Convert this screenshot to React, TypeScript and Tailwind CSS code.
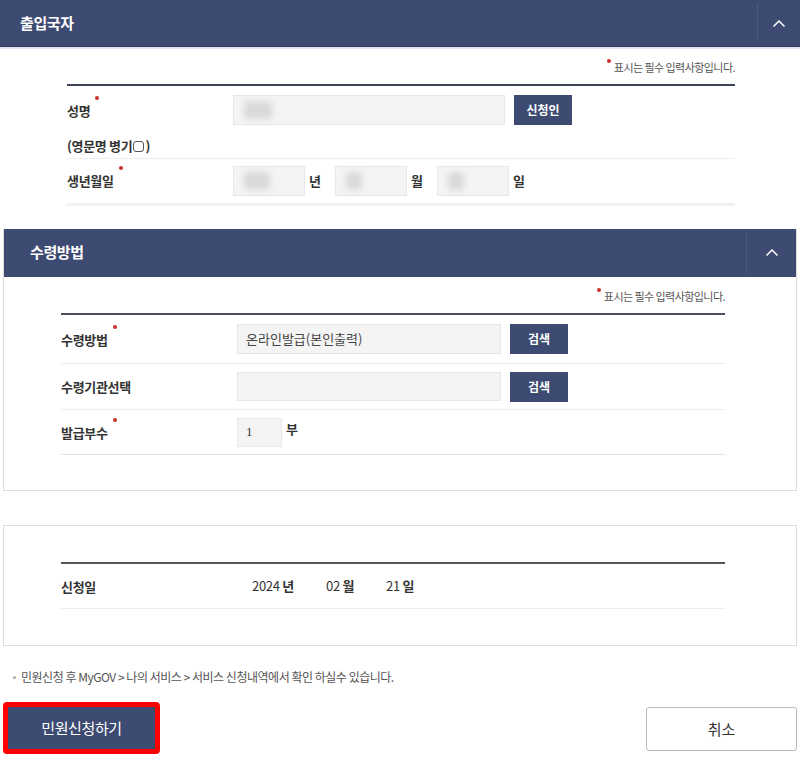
import React from "react";

const NAVY = "bg-[#3d4a72]";

function Dot() {
  return <span className="absolute -right-[9px] -top-[8px] h-[4px] w-[4px] rounded-full bg-[#c8322b]" />;
}

function Label({ text, required, w }: { text: string; required?: boolean; w: string }) {
  return (
    <div className={`flex ${w} items-center`}>
      <span className="relative block text-[13px] leading-none font-bold text-[#333] tracking-tight">
        {text}
        {required && <Dot />}
      </span>
    </div>
  );
}

function Chevron() {
  return (
    <svg width="14" height="9" viewBox="0 0 14 9" fill="none">
      <path d="M1.5 7.5L7 2l5.5 5.5" stroke="#fff" strokeWidth="1.5" />
    </svg>
  );
}

function RequiredNote() {
  return (
    <div className="flex justify-end">
      <span className="relative text-[11px] text-[#555] tracking-tighter">
        <span className="absolute -left-[7px] top-[0px] h-[4px] w-[4px] rounded-full bg-[#c8322b]" />
        표시는 필수 입력사항입니다.
      </span>
    </div>
  );
}

// blurred placeholder value shown in masked fields
function Masked({ w }: { w: string }) {
  return <div className={`h-[18px] ${w} rounded-sm bg-[#d9d9d9] blur-[3px]`} />;
}

function NavyButton({ text }: { text: string }) {
  return (
    <button className={`h-[30px] w-[58px] ${NAVY} text-[12px] font-bold text-white`}>{text}</button>
  );
}

export default function App() {
  return (
    <div className="h-[760px] w-[800px] overflow-hidden bg-white font-['Noto_Sans_CJK_KR',sans-serif] text-[#333]">
      {/* 출입국자 */}
      <div className="flex h-[47px] items-stretch justify-between bg-[#3d4a72] border-b border-[#2f3a5c]">
        <div className="flex items-center pl-5 text-[15px] font-bold text-white tracking-tight">출입국자</div>
        <div className="my-[4px] flex w-[43px] items-center justify-center border-l border-[#4d5a82]">
          <Chevron />
        </div>
      </div>
      <div className="h-[2px] bg-[#dfe6f3]" />
      <div className="pl-[67px] pr-[65px] pt-[10px]">
        <RequiredNote />
        <div className="mt-[8px] border-t-2 border-[#3d4458]" />
        <div className="border-b border-[#eee]">
          <div className="flex h-[49px] items-center">
            <Label text="성명" required w="w-[166px]" />
            <div className="flex h-[30px] w-[272px] items-center border border-[#e6e6e6] bg-[#f4f4f4] pl-[10px]">
              <Masked w="w-[28px]" />
            </div>
            <div className="ml-[9px]">
              <NavyButton text="신청인" />
            </div>
          </div>
          <div className="flex h-[23px] items-center text-[13px] font-bold tracking-tight">
            (영문명 병기
            <span className="mx-[1px] inline-block h-[11px] w-[11px] rounded-[3px] border border-[#555]" />)
          </div>
        </div>
        <div className="flex h-[47px] items-center border-b-[3px] border-[#f2f2f2]">
          <Label text="생년월일" required w="w-[166px]" />
          {[
            ["년", "w-[26px]"],
            ["월", "w-[16px]"],
            ["일", "w-[16px]"],
          ].map(([u, w]) => (
            <div key={u} className="flex items-center">
              <div className="flex h-[30px] w-[72px] items-center border border-[#e8e8e8] bg-[#f4f4f4] pl-[10px]">
                <Masked w={w} />
              </div>
              <span className="ml-[4px] w-[26px] text-[13px] font-bold">{u}</span>
            </div>
          ))}
        </div>
      </div>

      {/* 수령방법 */}
      <div className="mx-[3px] mt-[23px] border border-[#dcdcdc] border-t-0">
        <div className={`flex h-[48px] items-stretch justify-between ${NAVY}`}>
          <div className="flex items-center pl-[26px] text-[15px] font-bold text-white tracking-tight">수령방법</div>
          <div className="my-[3px] flex w-[50px] items-center justify-center border-l border-[#4d5a82]">
            <Chevron />
          </div>
        </div>
        <div className="pl-[57px] pr-[71px] pt-[11px] pb-[35px]">
          <RequiredNote />
          <div className="mt-[9px] border-t-2 border-[#4a4f5e]" />
          <div className="flex h-[49px] items-center border-b border-[#eee]">
            <Label text="수령방법" required w="w-[176px]" />
            <div className="flex h-[30px] w-[264px] items-center border border-[#e6e6e6] bg-[#f4f4f4] pl-[8px] text-[13px] text-[#444]">
              온라인발급(본인출력)
            </div>
            <div className="ml-[9px]">
              <NavyButton text="검색" />
            </div>
          </div>
          <div className="flex h-[46px] items-center border-b border-[#eee]">
            <Label text="수령기관선택" w="w-[176px]" />
            <div className="h-[29px] w-[264px] border border-[#e6e6e6] bg-[#f4f4f4]" />
            <div className="ml-[9px]">
              <NavyButton text="검색" />
            </div>
          </div>
          <div className="flex h-[45px] items-center border-b border-[#e4e4e4]">
            <Label text="발급부수" required w="w-[176px]" />
            <div className="flex h-[29px] w-[45px] items-center border border-[#e8e8e8] bg-[#f4f4f4] pl-[8px] text-[13px] font-['Liberation_Serif',serif]">
              1
            </div>
            <span className="ml-[4px] -mt-[6px] text-[13px] font-bold">부</span>
          </div>
        </div>
      </div>

      {/* 신청일 */}
      <div className="mx-[3px] mt-[34px] border border-[#dcdcdc] pl-[57px] pr-[71px] pt-[36px] pb-[36px]">
        <div className="border-t-2 border-[#555]" />
        <div className="flex h-[45px] items-center border-b border-[#eee]">
          <Label text="신청일" w="w-[191px]" />
          <span className="w-[74px] text-[13px] tracking-tight">
            2024 <b>년</b>
          </span>
          <span className="w-[60px] text-[13px] tracking-tight">
            02 <b>월</b>
          </span>
          <span className="text-[13px] tracking-tight">
            21 <b>일</b>
          </span>
        </div>
      </div>

      {/* 안내 */}
      <div className="mt-[22px] flex h-[18px] items-center pl-[13px] text-[12px] text-[#555] tracking-[-0.04em]">
        <span className="mr-[5px] h-[3px] w-[3px] rounded-full bg-[#aaa]" />
        민원신청 후 MyGOV &gt; 나의 서비스 &gt; 서비스 신청내역에서 확인 하실수 있습니다.
      </div>

      <div className="mt-[16px] flex items-start justify-between px-[3px]">
        <div className="rounded-[4px] bg-[#ff0000] p-[5px]">
          <button className={`h-[42px] w-[147px] ${NAVY} text-[15px] text-white tracking-tight`}>민원신청하기</button>
        </div>
        <button className="mt-[5px] h-[44px] w-[151px] rounded-[3px] border border-[#bbb] bg-white text-[15px] text-[#333]">
          취소
        </button>
      </div>
    </div>
  );
}
